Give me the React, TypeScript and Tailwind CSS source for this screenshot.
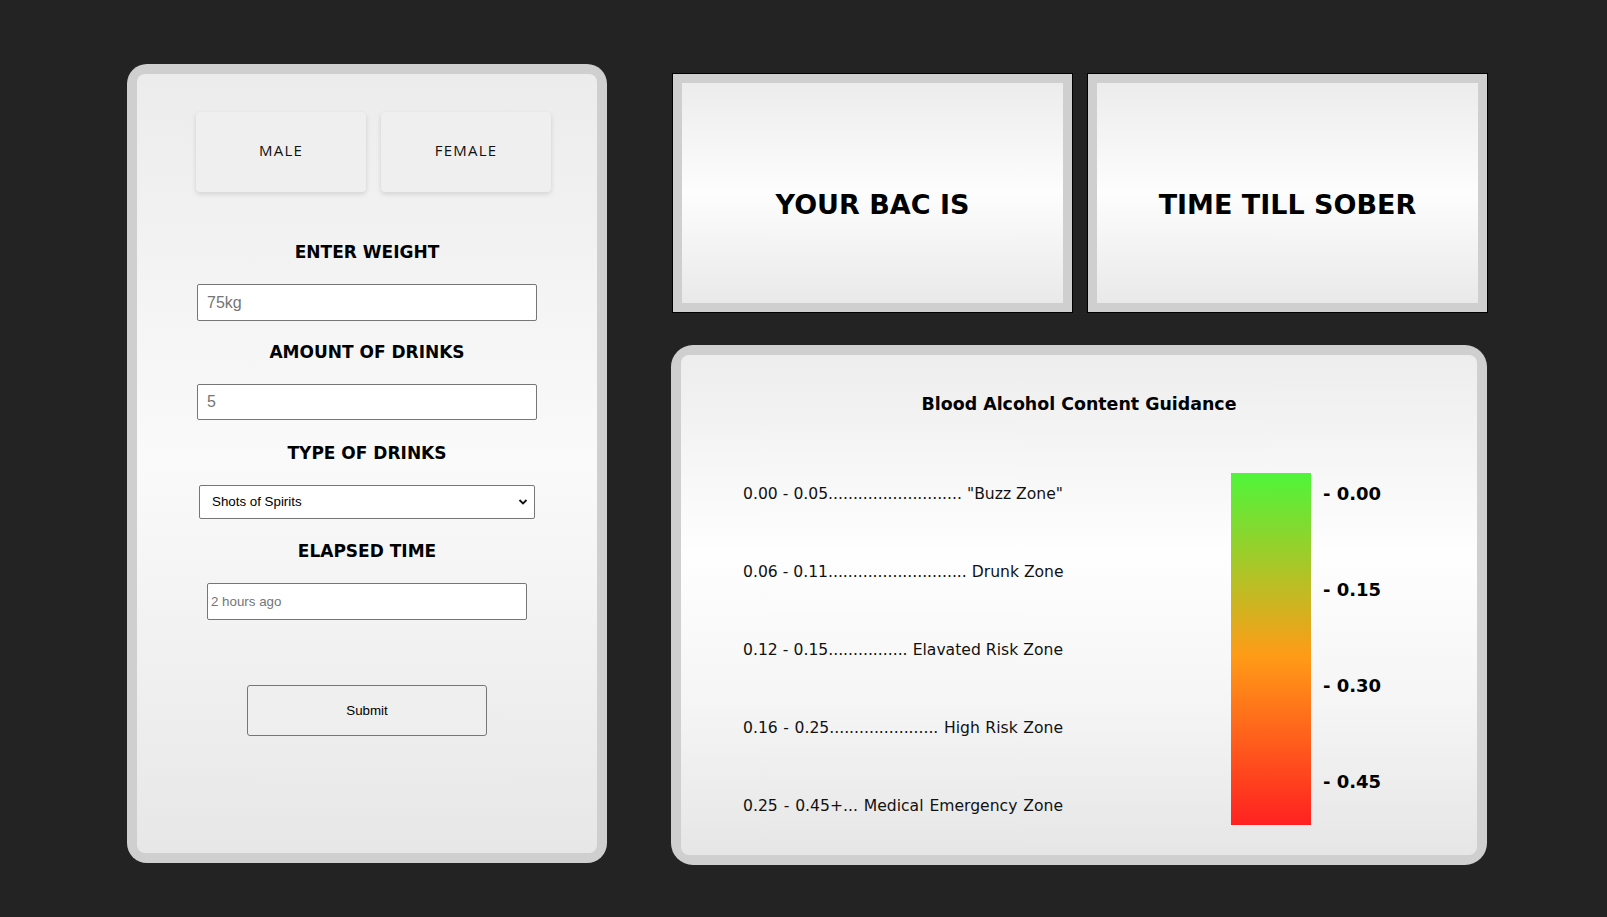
import { useState } from 'react';

const zones = [
  { range: '0.00 - 0.05', dots: 27, name: '"Buzz Zone"' },
  { range: '0.06 - 0.11', dots: 28, name: 'Drunk Zone' },
  { range: '0.12 - 0.15', dots: 16, name: 'Elavated Risk Zone' },
  { range: '0.16 - 0.25', dots: 22, name: 'High Risk Zone' },
  { range: '0.25 - 0.45+', dots: 3, name: 'Medical Emergency Zone' },
];

const scale = ['- 0.00', '- 0.15', '- 0.30', '- 0.45'];

const heading = "font-['DejaVu_Sans',sans-serif] font-bold text-[17px] leading-[24px] text-black text-center";

const ResultBox = ({ label }: { label: string }) => (
  <div className="w-[401px] h-[240px] border border-black bg-[#cfcfcf] p-[9px]">
    <div className="h-full flex items-center justify-center pt-6 bg-[linear-gradient(to_bottom,#ececec,#fdfdfd_50%,#e9e9e9)]">
      <h2 className="font-['DejaVu_Sans',sans-serif] font-bold text-[27px] text-black">{label}</h2>
    </div>
  </div>
);

export default function App() {
  const [sex, setSex] = useState<'male' | 'female' | null>(null);
  const [weight, setWeight] = useState('');
  const [drinks, setDrinks] = useState('');
  const [drinkType, setDrinkType] = useState('spirits');
  const [elapsed, setElapsed] = useState('');

  return (
    <div className="min-h-screen w-full bg-[#232323] flex">
      {/* input form */}
      <div className="ml-[127px] mt-[64px] w-[480px] h-[799px] rounded-[20px] bg-[#cfcfcf] p-[10px]">
        <div className="h-full rounded-[8px] bg-[linear-gradient(to_bottom,#ececec,#fafafa_50%,#e7e7e7)] pt-[38px] flex flex-col">
          <div className="flex gap-[15px] pl-[59px]">
            {(['male', 'female'] as const).map((s) => (
              <button
                key={s}
                onClick={() => setSex(s)}
                className={`w-[170px] h-[80px] pb-[3px] rounded-[4px] bg-[#efefef] shadow-[0_2px_5px_rgba(0,0,0,0.13)] font-['Open_Sans',sans-serif] text-[15px] tracking-[1.2px] text-[#111] uppercase ${sex === s ? 'bg-[#e4e4e4]' : ''}`}
              >
                {s}
              </button>
            ))}
          </div>

          <h3 className={`${heading} mt-[48px]`}>ENTER WEIGHT</h3>
          <input
            value={weight}
            onChange={(e) => setWeight(e.target.value)}
            placeholder="75kg"
            className="mx-auto mt-[20px] w-[340px] h-[37px] bg-white border border-[#767676] rounded-[2px] px-[9px] font-['Liberation_Sans',Arial,sans-serif] text-[16px] placeholder:text-[#757575] outline-none"
          />

          <h3 className={`${heading} mt-[19px]`}>AMOUNT OF DRINKS</h3>
          <input
            value={drinks}
            onChange={(e) => setDrinks(e.target.value)}
            placeholder="5"
            className="mx-auto mt-[20px] w-[340px] h-[36px] bg-white border border-[#767676] rounded-[2px] px-[9px] font-['Liberation_Sans',Arial,sans-serif] text-[16px] placeholder:text-[#757575] outline-none"
          />

          <h3 className={`${heading} mt-[21px]`}>TYPE OF DRINKS</h3>
          <div className="relative mx-auto mt-[20px] w-[336px] h-[34px]">
            <select
              value={drinkType}
              onChange={(e) => setDrinkType(e.target.value)}
              className="appearance-none w-full h-full bg-white border border-[#767676] rounded-[2px] pl-[12px] font-['Liberation_Sans',Arial,sans-serif] text-[13.33px] text-black outline-none"
            >
              <option value="spirits">Shots of Spirits</option>
              <option value="beer">Beer</option>
              <option value="wine">Glass of Wine</option>
            </select>
            <svg className="absolute right-[7px] top-[13px] w-[10px] h-[8px] pointer-events-none" viewBox="0 0 10 8">
              <path d="M1.5 2 L5 5.5 L8.5 2" fill="none" stroke="#111" strokeWidth="1.8" />
            </svg>
          </div>

          <h3 className={`${heading} mt-[20px]`}>ELAPSED TIME</h3>
          <input
            value={elapsed}
            onChange={(e) => setElapsed(e.target.value)}
            placeholder="2 hours ago"
            className="mx-auto mt-[20px] w-[320px] h-[37px] bg-white border border-[#767676] rounded-[2px] px-[3px] font-['Liberation_Sans',Arial,sans-serif] text-[13.33px] placeholder:text-[#757575] outline-none"
          />

          <button className="mx-auto mt-[65px] w-[240px] h-[51px] bg-[#efefef] border border-[#767676] rounded-[3px] font-['Liberation_Sans',Arial,sans-serif] text-[13.33px] text-black">
            Submit
          </button>
        </div>
      </div>

      {/* results */}
      <div className="ml-[64px] mt-[73px] flex flex-col">
        <div className="flex gap-[14px] pl-[1px]">
          <ResultBox label="YOUR BAC IS" />
          <ResultBox label="TIME TILL SOBER" />
        </div>

        <div className="mt-[32px] w-[816px] h-[520px] rounded-[22px] bg-[#cfcfcf] p-[10px]">
          <div className="h-full rounded-[8px] bg-[linear-gradient(to_bottom,#ededed,#fefefe_40%,#f5f5f5_70%,#e6e6e6)] flex flex-col">
            <h2 className="mt-[35px] text-center font-['DejaVu_Sans',sans-serif] font-bold text-[17.4px] leading-[28px] text-black">
              Blood Alcohol Content Guidance
            </h2>

            <div className="mt-[55px] flex items-start pl-[62px]">
              <ul className="w-[320px] pt-[9px] flex flex-col gap-[54px] font-['DejaVu_Sans',sans-serif] text-[15.6px] leading-[24px] text-[#111]">
                {zones.map((z) => (
                  <li key={z.range} className="whitespace-nowrap [text-align-last:justify]">
                    {z.range + '.'.repeat(z.dots) + ' ' + z.name}
                  </li>
                ))}
              </ul>

              <div className="ml-[168px] w-[80px] h-[352px] bg-[linear-gradient(to_bottom,#4ef53a,#ff9b17_52%,#ff2121)]" />

              <div className="ml-[12px] pt-[9px] flex flex-col gap-[72px] font-['DejaVu_Sans',sans-serif] font-bold text-[18px] leading-[24px] text-black">
                {scale.map((s) => (
                  <span key={s}>{s}</span>
                ))}
              </div>
            </div>
          </div>
        </div>
      </div>
    </div>
  );
}
